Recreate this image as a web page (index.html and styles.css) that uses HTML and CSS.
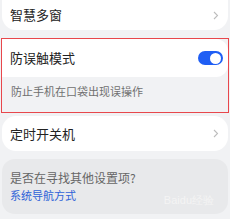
FILE: index.html
```html
<!DOCTYPE html>
<html lang="zh">
<head>
<meta charset="utf-8">
<link rel="stylesheet" href="styles.css">
</head>
<body>
<div class="page">
  <div class="card card-top row">
    <span class="title">智慧多窗</span>
    <svg class="chev" width="6" height="9" viewBox="0 0 6 9"><path d="M1 1 L4.5 4.5 L1 8" fill="none" stroke="#bdbdbd" stroke-width="1.1"/></svg>
  </div>
  <div class="highlight">
    <div class="card-inner row">
      <span class="title">防误触模式</span>
      <span class="toggle"><span class="knob"></span></span>
    </div>
    <div class="desc">防止手机在口袋出现误操作</div>
  </div>
  <div class="card card-mid row">
    <span class="title">定时开关机</span>
    <svg class="chev" width="6" height="9" viewBox="0 0 6 9"><path d="M1 1 L4.5 4.5 L1 8" fill="none" stroke="#bdbdbd" stroke-width="1.1"/></svg>
  </div>
  <div class="card-gray">
    <div class="question">是否在寻找其他设置项?</div>
    <div class="link">系统导航方式</div>
    <div class="watermark">Baidu经验</div>
  </div>
</div>
</body>
</html>
```

FILE: styles.css
```css
html, body {
  margin: 0;
  padding: 0;
}
body {
  width: 230px;
  height: 219px;
  background: #f1f2f4;
  font-family: "Noto Sans CJK SC", "Noto Sans", sans-serif;
  overflow: hidden;
}
.page {
  display: flex;
  flex-direction: column;
  padding: 0 2px;
}
.row {
  display: flex;
  align-items: center;
  justify-content: space-between;
  box-sizing: border-box;
}
.card {
  background: #fff;
  padding: 0 8px 0 8px;
}
.title {
  font-size: 13px;
  color: #222;
  line-height: 16px;
}
.chev {
  margin-right: 1px;
}
.card-top {
  height: 30px;
  border-radius: 0 0 14px 14px;
}
.highlight {
  margin: 8px -1px 0 -1px;
  border: 1px solid #e8474c;
  height: 75px;
  box-sizing: border-box;
  background: #f1f2f4;
}
.card-inner {
  height: 38px;
  background: #fff;
  border-radius: 0 12px 12px 0;
  padding: 0 5px 0 8px;
}
.toggle {
  width: 25px;
  height: 14px;
  border-radius: 7px;
  background: #1f5ef4;
  display: flex;
  align-items: center;
  justify-content: flex-end;
  padding: 0 2px;
  box-sizing: border-box;
}
.knob {
  width: 11px;
  height: 11px;
  border-radius: 50%;
  background: #fff;
}
.desc {
  font-size: 11px;
  color: #707070;
  padding: 7px 0 0 9px;
  line-height: 14px;
}
.card-mid {
  margin-top: 3px;
  height: 35px;
  border-radius: 14px;
}
.card-gray {
  position: relative;
  margin-top: 8px;
  height: 55px;
  border-radius: 13px;
  background: #e8e9eb;
  box-sizing: border-box;
  padding: 11px 8px 0 8px;
}
.question {
  font-size: 12px;
  color: #666;
  line-height: 15px;
}
.link {
  margin-top: 3px;
  font-size: 11px;
  color: #2f62d8;
  line-height: 14px;
}
.watermark {
  position: absolute;
  right: 14px;
  top: 34px;
  font-family: "Liberation Sans", sans-serif;
  font-size: 11px;
  color: #f4f4f4;
}
```
